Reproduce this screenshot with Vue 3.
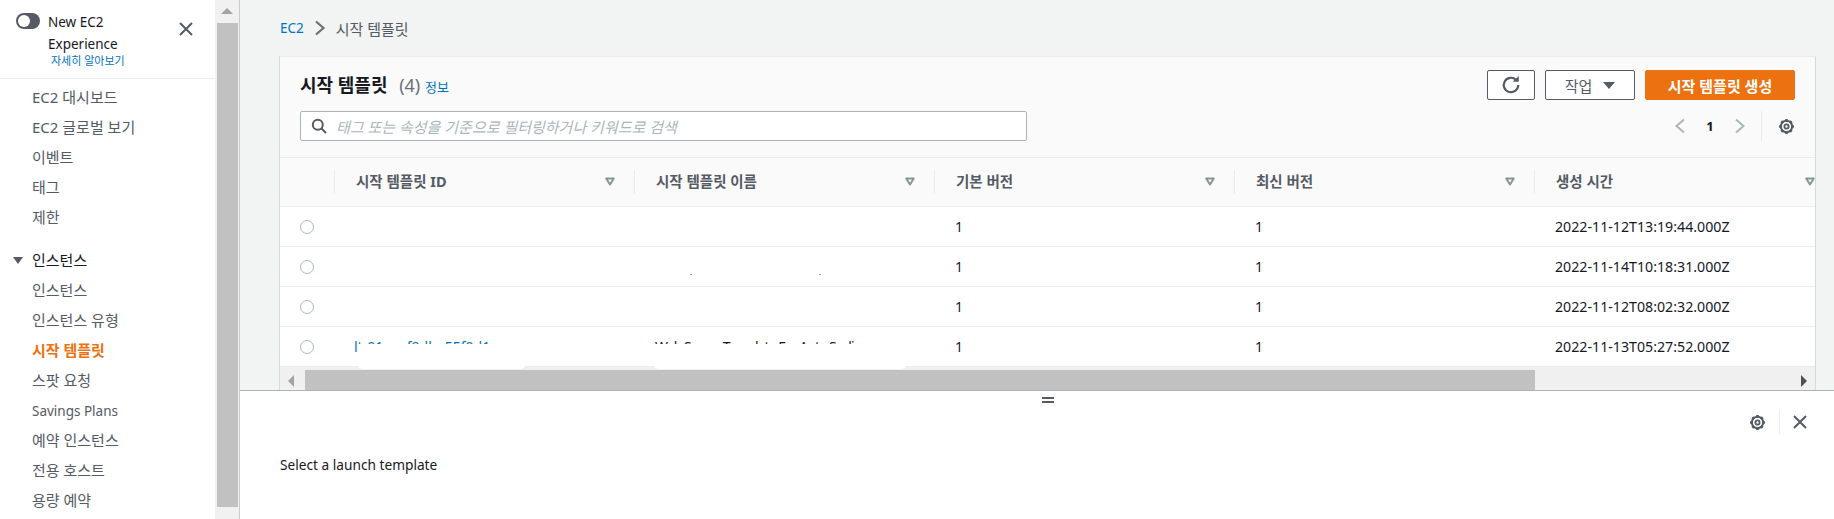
<script setup>
const nav1 = ['EC2 대시보드', 'EC2 글로벌 보기', '이벤트', '태그', '제한']
const nav2 = ['인스턴스', '인스턴스 유형', '시작 템플릿', '스팟 요청', 'Savings Plans', '예약 인스턴스', '전용 호스트', '용량 예약']
const cols = ['시작 템플릿 ID', '시작 템플릿 이름', '기본 버전', '최신 버전', '생성 시간']
const rows = [
  { id: '', name: '', time: '2022-11-12T13:19:44.000Z' },
  { id: '', name: '', time: '2022-11-14T10:18:31.000Z' },
  { id: '', name: '', time: '2022-11-12T08:02:32.000Z' },
  { id: 'lt-01aeaf9dbe55f0d1a', name: 'Web Server Template For Auto Scaling', time: '2022-11-13T05:27:52.000Z' }
]
const teeth = 'M12 1.500v3.500M12 19v3.500M1.500 12H5M19 12h3.500M4.600 4.600l2.400 2.400M17 17l2.400 2.400M19.400 4.600L17 7M7 17l-2.400 2.400'
</script>

<template>
  <div class="page">
    <aside class="side">
      <div class="exp">
        <span class="toggle"><i></i></span>
        <div class="exp-text">
          <div class="exp-title">New EC2<br>Experience</div>
          <a class="exp-link">자세히 알아보기</a>
        </div>
        <svg class="close" width="16" height="16" viewBox="0 0 16 16"><path d="M2 2l12 12M14 2L2 14" stroke="#545b64" stroke-width="2" fill="none"/></svg>
      </div>
      <nav class="nav">
        <a v-for="n in nav1" :key="n">{{ n }}</a>
      </nav>
      <div class="group"><span class="tri"></span>인스턴스</div>
      <nav class="nav nav2">
        <a v-for="n in nav2" :key="n" :class="{ on: n === '시작 템플릿', lat: n === 'Savings Plans' }">{{ n }}</a>
      </nav>
    </aside>

    <div class="vscroll">
      <span class="up"></span>
      <div class="vthumb"></div>
    </div>

    <div class="right">
      <main class="main">
        <div class="crumb">
          <a>EC2</a>
          <svg width="12" height="16" viewBox="0 0 12 16"><path d="M2 1.500l7.500 6.500L2 14.500" stroke="#687078" stroke-width="2.200" fill="none"/></svg>
          <span>시작 템플릿</span>
        </div>
        <section class="panel">
          <div class="head">
            <div class="head-top">
              <h2>시작 템플릿 <span class="cnt">(4)</span> <a>정보</a></h2>
              <div class="btns">
                <button class="btn icon">
                  <svg width="20" height="20" viewBox="0 0 18 18"><path d="M15.500 9a6.500 6.500 0 1 1-2-4.700" stroke="#545b64" stroke-width="2" fill="none"/><path d="M10.500 6h5.500V.8z" fill="#545b64"/></svg>
                </button>
                <button class="btn act">작업 <span class="down"></span></button>
                <button class="btn primary">시작 템플릿 생성</button>
              </div>
            </div>
            <div class="head-bot">
              <div class="search">
                <svg width="16" height="16" viewBox="0 0 16 16"><circle cx="6.800" cy="6.800" r="5" stroke="#545b64" stroke-width="2" fill="none"/><path d="M10.500 10.500l4.500 4.500" stroke="#545b64" stroke-width="2"/></svg>
                <span>태그 또는 속성을 기준으로 필터링하거나 키워드로 검색</span>
              </div>
              <div class="pager">
                <svg width="12" height="16" viewBox="0 0 12 16"><path d="M10 1.500L2.500 8l7.500 6.500" stroke="#aab7b8" stroke-width="2" fill="none"/></svg>
                <b>1</b>
                <svg width="12" height="16" viewBox="0 0 12 16"><path d="M2 1.500L9.500 8 2 14.500" stroke="#aab7b8" stroke-width="2" fill="none"/></svg>
                <span class="vline"></span>
                <svg class="gear" width="17" height="17" viewBox="0 0 24 24"><circle cx="12" cy="12" r="8" stroke="#545b64" stroke-width="2.800" fill="none"/><circle cx="12" cy="12" r="3" stroke="#545b64" stroke-width="2.600" fill="none"/><path :d="teeth" stroke="#545b64" stroke-width="3.600"/></svg>
              </div>
            </div>
          </div>
          <div class="thead">
            <div class="cell-radio"></div>
            <div v-for="c in cols" :key="c" class="th">
              <span>{{ c }}</span>
              <svg class="sort" width="10" height="9" viewBox="0 0 12 10"><path d="M1.500 1.500h9L6 8.500z" stroke="#879596" stroke-width="2.400" fill="none" stroke-linejoin="round"/></svg>
            </div>
          </div>
          <div v-for="(r, i) in rows" :key="i" class="tr">
            <div class="cell-radio"><span class="radio"></span></div>
            <div class="td link">{{ r.id }}</div>
            <div class="td name">{{ r.name }}</div>
            <div class="td">1</div>
            <div class="td">1</div>
            <div class="td time">{{ r.time }}</div>
          </div>
          <div class="hscroll">
            <span class="left"></span>
            <div class="hthumb"></div>
            <span class="rightarrow"></span>
          </div>
          <div class="mask m1"></div>
          <div class="mask m2"></div>
          <div class="speck s1"></div>
          <div class="speck s2"></div>
        </section>
      </main>
      <section class="split">
        <div class="handle"></div>
        <div class="split-tools">
          <svg class="gear" width="17" height="17" viewBox="0 0 24 24"><circle cx="12" cy="12" r="8" stroke="#545b64" stroke-width="2.800" fill="none"/><circle cx="12" cy="12" r="3" stroke="#545b64" stroke-width="2.600" fill="none"/><path :d="teeth" stroke="#545b64" stroke-width="3.600"/></svg>
          <span class="vline"></span>
          <svg width="16" height="16" viewBox="0 0 16 16"><path d="M2 2l12 12M14 2L2 14" stroke="#545b64" stroke-width="2" fill="none"/></svg>
        </div>
        <p>Select a launch template</p>
      </section>
    </div>
  </div>
</template>

<style scoped>
* { box-sizing: border-box; }
.page {
  width: 1834px; height: 519px; display: flex; overflow: hidden; background: #fff;
  font-family: "Noto Sans", "Noto Sans CJK KR", sans-serif; font-size: 14px; color: #16191f;
}
.side { width: 215px; flex: none; background: #fff; color: #545b64; }
.exp { height: 79px; border-bottom: 1px solid #eaeded; padding: 11px 0 0 16px; display: flex; position: relative; }
.toggle { width: 24px; height: 16px; border-radius: 8px; background: #545b64; margin-top: 2px; flex: none; position: relative; }
.toggle i { position: absolute; left: 2px; top: 2px; width: 12px; height: 12px; border-radius: 50%; background: #fff; }
.exp-text { margin-left: 8px; }
.exp-title { font-size: 13.500px; line-height: 22px; color: #16191f; }
.exp-link { display: block; margin-left: 3px; margin-top: -1px; font-size: 11px; line-height: 13px; color: #0073bb; }
.close { position: absolute; left: 178px; top: 21px; }
.nav { display: flex; flex-direction: column; padding-top: 3px; }
.nav a { height: 30px; line-height: 30px; padding-left: 32px; font-size: 15px; white-space: nowrap; }
.nav a.lat { font-size: 13.500px; line-height: 32px; }
.group { height: 30px; margin-top: 13px; padding-left: 13px; line-height: 30px; font-size: 15px; display: flex; align-items: center; color: #16191f; }
.tri { width: 0; height: 0; border: 5px solid transparent; border-top: 7px solid #545b64; border-bottom: 0; margin-right: 9px; }
.nav2 { padding-top: 0; }
.nav2 a.on { color: #ec7211; font-weight: 700; }

.vscroll { width: 25px; flex: none; background: #f1f1f1; position: relative; border-right: 1px solid #c8cccc; }
.up { position: absolute; left: 6px; top: 8px; width: 0; height: 0; border: 6px solid transparent; border-top: 0; border-bottom: 6px solid #a3a3a3; }
.vthumb { position: absolute; left: 2px; top: 23px; width: 21px; height: 484px; background: #c1c1c1; }

.right { flex: 1; min-width: 0; display: flex; flex-direction: column; }
.main { height: 390px; flex: none; background: #f2f3f3; padding: 0 18px 0 39px; overflow: hidden; }
.crumb { height: 56px; display: flex; align-items: center; gap: 10px; font-size: 15px; color: #545b64; padding-left: 1px; }
.crumb a { color: #0073bb; font-size: 13.500px; }
.panel { position: relative; background: #fafafa; border-left: 1px solid #d5dbdb; border-right: 1px solid #d5dbdb; border-top: 1px solid #eaeded; height: 334px; overflow: hidden; }
.head { height: 101px; border-bottom: 1px solid #eaeded; padding: 13px 20px 0 20px; }
.head-top { display: flex; justify-content: space-between; align-items: flex-start; height: 30px; }
h2 { margin: 0; font-size: 18px; line-height: 30px; font-weight: 700; color: #16191f; white-space: nowrap; }
.cnt { font-weight: 400; color: #687078; margin-left: 7px; }
h2 a { font-size: 13px; font-weight: 400; color: #0073bb; margin-left: 0; }
.btns { display: flex; gap: 10px; }
.btn { height: 30px; border-radius: 2px; border: 1px solid #545b64; background: #fff; color: #545b64; font: inherit; font-size: 15px; display: flex; align-items: center; justify-content: center; padding: 0; }
.icon { width: 48px; }
.act { width: 90px; gap: 11px; }
.down { width: 0; height: 0; border: 6px solid transparent; border-top: 7px solid #545b64; border-bottom: 0; }
.primary { width: 150px; background: #ec7211; border-color: #ec7211; color: #fff; font-weight: 700; }
.head-bot { display: flex; justify-content: space-between; align-items: center; margin-top: 11px; height: 30px; }
.search { width: 727px; height: 30px; background: #fff; border: 1px solid #aab7b8; border-radius: 2px; display: flex; align-items: center; gap: 9px; padding-left: 10px; }
.search span { font-style: italic; font-size: 15px; color: #aab7b8; }
.pager { display: flex; align-items: center; }
.pager b { width: 48px; text-align: center; font-size: 13px; }
.vline { display: block; width: 1px; height: 30px; background: #eaeded; margin: 0 16px 0 15px; }
.thead { height: 49px; display: flex; align-items: center; border-bottom: 1px solid #eaeded; }
.cell-radio { width: 54px; flex: none; display: flex; align-items: center; justify-content: center; }
.th { width: 300px; flex: none; height: 24px; display: flex; align-items: center; justify-content: space-between; padding: 0 19px 0 21px; border-left: 1px solid #eaeded; font-weight: 700; font-size: 14.500px; color: #545b64; line-height: 20px; }
.th span { margin-top: -3px; }
.sort { flex: none; margin-top: -2px; }
.tr { height: 40px; display: flex; align-items: center; background: #fff; border-bottom: 1px solid #eaeded; }
.tr:last-of-type { border-bottom: 0; }
.radio { width: 14px; height: 14px; border-radius: 50%; border: 1.500px solid #aab7b8; background: #fff; }
.td { width: 300px; flex: none; padding-left: 21px; font-size: 14px; white-space: nowrap; overflow: hidden; }
.td.name { letter-spacing: -1px; }
.td.time { padding-left: 21px; overflow: visible; font-size: 14.200px; }
.link { color: #0073bb; padding-left: 20px; }
.hscroll { height: 20px; background: #f0f0f0; position: relative; margin-top: 3px; box-shadow: 0 -3px 0 #f0f0f0; }
.left { position: absolute; left: 8px; top: 5px; width: 0; height: 0; border: 6px solid transparent; border-left: 0; border-right: 6px solid #a3a3a3; }
.rightarrow { position: absolute; right: 8px; top: 5px; width: 0; height: 0; border: 6px solid transparent; border-right: 0; border-left: 6px solid #505050; }
.hthumb { position: absolute; left: 25px; top: 0; width: 1230px; height: 20px; background: #c1c1c1; }
.mask { position: absolute; background: #fff; top: 287px; height: 25px; border-radius: 0 0 6px 6px; }
.m1 { left: 77px; width: 169px; }
.m2 { left: 373px; width: 254px; }
.speck { position: absolute; top: 217px; width: 2px; height: 1px; background: #9a9a9a; }
.s1 { left: 410px; }
.s2 { left: 539px; }

.split { flex: 1; background: #fff; border-top: 1px solid #aab7b8; position: relative; padding: 65px 0 0 40px; }
.split p { margin: 0; font-size: 13.700px; line-height: 18px; color: #16191f; }
.handle { position: absolute; left: 802px; top: 6px; width: 12px; height: 6px; border-top: 2px solid #545b64; border-bottom: 2px solid #545b64; }
.split-tools { position: absolute; right: 26px; top: 19px; display: flex; align-items: center; }
.split-tools .vline { height: 24px; margin: 0 12px 0 13px; }
</style>
